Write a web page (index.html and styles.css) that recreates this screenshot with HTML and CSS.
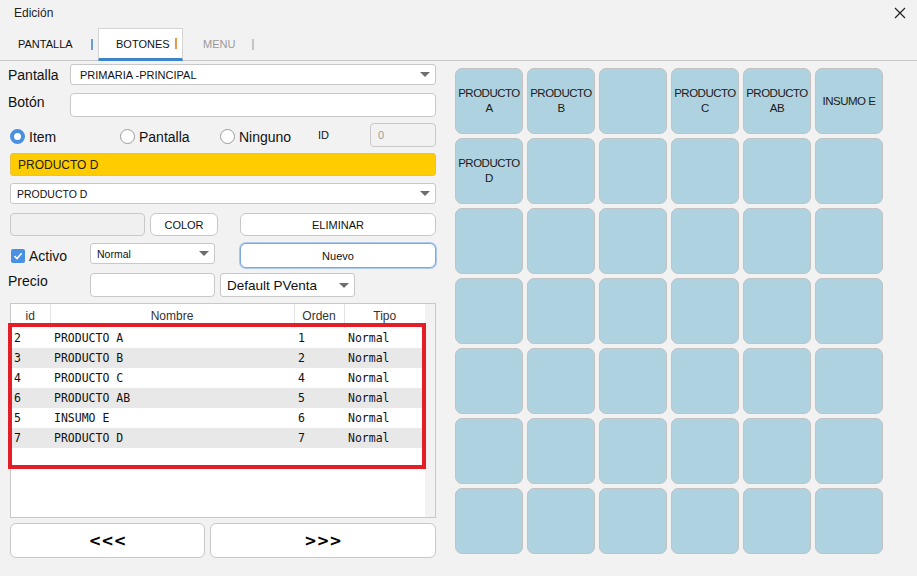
FILE: index.html
```html
<!DOCTYPE html>
<html lang="es">
<head>
  <meta charset="UTF-8" />
  <title>Edición</title>
  <link rel="stylesheet" href="styles.css">
</head>
<body>
  <div class="titlebar">
    <span class="title">Edición</span>
    <svg class="close" width="12" height="12" viewBox="0 0 12 12">
      <path d="M1 1 L11 11 M11 1 L1 11" stroke="#222" stroke-width="1.2" fill="none" />
    </svg>
  </div>

  <div class="tabs">
    <div class="tab tab-1"><span class="tab-label">PANTALLA</span><span class="sep sep-blue"></span></div>
    <div class="tab tab-2 active"><span class="tab-label">BOTONES</span><span class="sep sep-orange"></span></div>
    <div class="tab tab-3 disabled"><span class="tab-label">MENU</span><span class="sep sep-gray"></span></div>
  </div>

  <div class="main">
    <div class="left">
      <div class="row r1">
        <label class="lbl lbl-wide">Pantalla</label>
        <div class="select grow"><span>PRIMARIA -PRINCIPAL</span><i class="arrow"></i></div>
      </div>

      <div class="row r2">
        <label class="lbl lbl-wide lbl-up">Botón</label>
        <div class="input grow"></div>
      </div>

      <div class="row r3">
        <div class="radio-item w110"><span class="radio checked"></span>Item</div>
        <div class="radio-item w100"><span class="radio"></span>Pantalla</div>
        <div class="radio-item w98"><span class="radio"></span>Ninguno</div>
        <div class="id-label">ID</div>
        <div class="input id-input">0</div>
      </div>

      <div class="row r4">
        <div class="highlight">PRODUCTO D</div>
      </div>

      <div class="row r5">
        <div class="select grow small"><span>PRODUCTO D</span><i class="arrow"></i></div>
      </div>

      <div class="row r6">
        <div class="color-box"></div>
        <button class="btn btn-color">COLOR</button>
        <button class="btn btn-wide">ELIMINAR</button>
      </div>

      <div class="row r7">
        <div class="check-item"><span class="check">
          <svg width="10" height="10" viewBox="0 0 10 10"><path d="M1.5 5.2 L4 7.6 L8.6 2.2" stroke="#fff" stroke-width="1.6" fill="none" /></svg>
        </span>Activo</div>
        <div class="select w125 small"><span>Normal</span><i class="arrow"></i></div>
        <button class="btn btn-wide btn-focus">Nuevo</button>
      </div>

      <div class="row r8">
        <label class="lbl lbl-precio">Precio</label>
        <div class="input w125"></div>
        <div class="select w135 big"><span>Default PVenta</span><i class="arrow"></i></div>
      </div>

      <div class="grid-frame">
        <div class="grid-body">
          <table class="grid">
            <colgroup>
              <col class="c-id"><col class="c-nombre"><col class="c-orden"><col class="c-tipo">
            </colgroup>
            <thead>
              <tr><th>id</th><th>Nombre</th><th>Orden</th><th>Tipo</th></tr>
            </thead>
            <tbody>
              <tr><td>2</td><td>PRODUCTO A</td><td>1</td><td>Normal</td></tr>
              <tr><td>3</td><td>PRODUCTO B</td><td>2</td><td>Normal</td></tr>
              <tr><td>4</td><td>PRODUCTO C</td><td>4</td><td>Normal</td></tr>
              <tr><td>6</td><td>PRODUCTO AB</td><td>5</td><td>Normal</td></tr>
              <tr><td>5</td><td>INSUMO E</td><td>6</td><td>Normal</td></tr>
              <tr><td>7</td><td>PRODUCTO D</td><td>7</td><td>Normal</td></tr>
            </tbody>
          </table>
        </div>
        <div class="mark"></div>
      </div>

      <div class="row nav">
        <button class="btn nav-btn prev">&lt;&lt;&lt;</button>
        <button class="btn nav-btn next">&gt;&gt;&gt;</button>
      </div>
    </div>

    <div class="right">
      <div class="tiles">
        <div class="tile">PRODUCTO A</div>
        <div class="tile">PRODUCTO B</div>
        <div class="tile"></div>
        <div class="tile">PRODUCTO C</div>
        <div class="tile">PRODUCTO AB</div>
        <div class="tile">INSUMO E</div>
        <div class="tile">PRODUCTO D</div>
        <div class="tile"></div><div class="tile"></div><div class="tile"></div><div class="tile"></div><div class="tile"></div>
        <div class="tile"></div><div class="tile"></div><div class="tile"></div><div class="tile"></div><div class="tile"></div><div class="tile"></div>
        <div class="tile"></div><div class="tile"></div><div class="tile"></div><div class="tile"></div><div class="tile"></div><div class="tile"></div>
        <div class="tile"></div><div class="tile"></div><div class="tile"></div><div class="tile"></div><div class="tile"></div><div class="tile"></div>
        <div class="tile"></div><div class="tile"></div><div class="tile"></div><div class="tile"></div><div class="tile"></div><div class="tile"></div>
        <div class="tile"></div><div class="tile"></div><div class="tile"></div><div class="tile"></div><div class="tile"></div><div class="tile"></div>
      </div>
    </div>
  </div>
</body>
</html>
```

FILE: styles.css
```css
* {
  margin: 0;
  padding: 0;
  box-sizing: border-box;
}

body {
  width: 917px;
  height: 576px;
  overflow: hidden;
  background: #f2f2f2;
  font-family: 'Liberation Sans', Arial, sans-serif;
  color: #111;
}

.titlebar {
  height: 25px;
  display: flex;
  align-items: center;
  justify-content: space-between;
  padding: 0 11px 0 14px;
}

.title {
  font-size: 12px;
  color: #222;
}

.tabs {
  margin-top: 3px;
  height: 33px;
  display: flex;
  border-bottom: 1px solid #c8c8c8;
}

.tab {
  height: 32px;
  display: flex;
  align-items: center;
  font-size: 11px;
}

.tab-1 { width: 98px; padding-left: 18px; }
.tab-1 .tab-label { width: 73px; }
.tab-2 { width: 85px; padding-left: 17px; }
.tab-2 .tab-label { width: 59px; }
.tab-3 { padding-left: 20px; }
.tab-3 .tab-label { width: 49px; }

.tab.active {
  background: #fff;
  border: 1px solid #d4d4d4;
  border-bottom: 3px solid #3d85c6;
  height: 33px;
}

.tab.disabled .tab-label {
  color: #9a9a9a;
}

.sep {
  width: 2px;
  height: 11px;
}

.sep-blue { background: #6a9fd6; }
.sep-orange { background: #e39a4c; }
.sep-gray { background: #c4c4c4; }

.main {
  display: flex;
  padding-top: 3px;
}

.left {
  width: 437px;
  padding: 0 1px 0 10px;
}

.right {
  padding: 4px 0 0 18px;
}

.row {
  display: flex;
  align-items: center;
}

.r1 { height: 21px; }
.r2 { height: 24px; margin-top: 8px; }
.r3 { height: 24px; margin-top: 6px; }
.r4 { height: 23px; margin-top: 6px; }
.r5 { height: 21px; margin-top: 7px; }
.r6 { height: 23px; margin-top: 9px; }
.r7 { height: 25px; margin-top: 7px; }
.r8 { height: 24px; margin-top: 5px; }

.lbl {
  font-size: 14px;
  margin-left: -2px;
}

.lbl-up { margin-top: -6px; }

.lbl-wide { width: 62px; }
.lbl-precio { width: 82px; align-self: flex-start; }

.grow { flex: 1; }
.w125 { width: 125px; }
.w135 { width: 135px; margin-left: 5px; }

.select {
  height: 100%;
  background: #fff;
  border: 1px solid #c8c8c8;
  border-radius: 3px;
  display: flex;
  align-items: center;
  justify-content: space-between;
  padding: 0 5px 0 9px;
  font-size: 11px;
}

.select.small {
  font-size: 10.5px;
  padding-left: 6px;
}

.r7 .select {
  height: 21px;
  align-self: flex-start;
}

.select.big {
  font-size: 13.5px;
  padding-left: 6px;
}

.arrow {
  width: 0;
  height: 0;
  border-left: 5px solid transparent;
  border-right: 5px solid transparent;
  border-top: 5px solid #6e6e6e;
}

.input {
  height: 100%;
  background: #fff;
  border: 1px solid #c8c8c8;
  border-radius: 4px;
}

.radio-item {
  display: flex;
  align-items: center;
  font-size: 14px;
  height: 100%;
  padding-top: 3px;
}

.w110 { width: 110px; }
.w100 { width: 100px; }
.w98 { width: 98px; }

.radio {
  width: 15px;
  height: 15px;
  border-radius: 50%;
  border: 1px solid #9c9c9c;
  background: #fff;
  margin-right: 4px;
}

.radio.checked {
  border: 4px solid #4a90e2;
  background: #fff;
}

.id-label {
  width: 52px;
  font-size: 11px;
}

.id-input {
  width: 66px;
  background: #f2f2f2;
  display: flex;
  align-items: center;
  padding-left: 7px;
  font-size: 11px;
  color: #9a9a9a;
}

.highlight {
  width: 100%;
  height: 100%;
  background: #ffcc00;
  border: 1px solid #e4c24a;
  border-radius: 3px;
  display: flex;
  align-items: center;
  padding-left: 7px;
  font-size: 12px;
  color: #222;
}

.color-box {
  width: 135px;
  height: 100%;
  background: #f0f0f0;
  border: 1px solid #c8c8c8;
  border-radius: 4px;
}

.btn {
  height: 100%;
  background: #fff;
  border: 1px solid #c8c8c8;
  border-radius: 6px;
  font-family: 'Liberation Sans', Arial, sans-serif;
  font-size: 11px;
  color: #111;
}

.btn-color {
  width: 68px;
  margin-left: 5px;
}

.btn-wide {
  width: 196px;
  margin-left: auto;
}

.btn-focus {
  border: 1px solid #7ea9dc;
  box-shadow: 0 0 0 1px #a9c8ec;
}

.check-item {
  width: 80px;
  display: flex;
  align-items: center;
  font-size: 14px;
  padding-left: 1px;
}

.check {
  width: 14px;
  height: 14px;
  background: #4a90e2;
  border-radius: 2px;
  display: flex;
  align-items: center;
  justify-content: center;
  margin-right: 4px;
}

.grid-frame {
  position: relative;
  margin-top: 6px;
  height: 215px;
  border: 1px solid #c8c8c8;
  background: #f2f2f2;
}

.grid-body {
  width: 414px;
  height: 100%;
  background: #fff;
}

.grid {
  width: 414px;
  table-layout: fixed;
  border-collapse: collapse;
}

.c-id { width: 39px; }
.c-nombre { width: 244px; }
.c-orden { width: 50px; }
.c-tipo { width: 81px; }

.grid th {
  height: 24px;
  font-weight: normal;
  font-size: 12px;
  color: #333;
  border-right: 1px solid #e2e2e2;
  text-align: center;
}

.grid th:last-child {
  border-right: none;
}

.grid td {
  height: 20px;
  padding-left: 4px;
  font-family: 'DejaVu Sans Mono', monospace;
  font-size: 11.5px;
  color: #111;
  white-space: nowrap;
}

.grid td:first-child {
  padding-left: 3px;
}

.grid tbody tr:nth-child(even) td {
  background: #e8e8e8;
}

.mark {
  position: absolute;
  left: -3px;
  top: 19px;
  width: 418px;
  height: 146px;
  border: 4px solid #e41e26;
}

.nav {
  height: 35px;
  margin-top: 5px;
  gap: 5px;
}

.nav-btn {
  font-family: 'DejaVu Sans', sans-serif;
  font-size: 15px;
  font-weight: bold;
  color: #000;
}

.prev { width: 195px; }
.next { flex: 1; }

.tiles {
  display: grid;
  grid-template-columns: repeat(6, 68px);
  grid-auto-rows: 66px;
  gap: 4px;
}

.tile {
  background: #afd2e0;
  border: 1px solid #c2c2c2;
  border-radius: 7px;
  display: flex;
  align-items: center;
  justify-content: center;
  text-align: center;
  padding: 0 2px;
  font-size: 11.5px;
  letter-spacing: -0.5px;
  line-height: 15px;
  color: #1a1a1a;
}
```
